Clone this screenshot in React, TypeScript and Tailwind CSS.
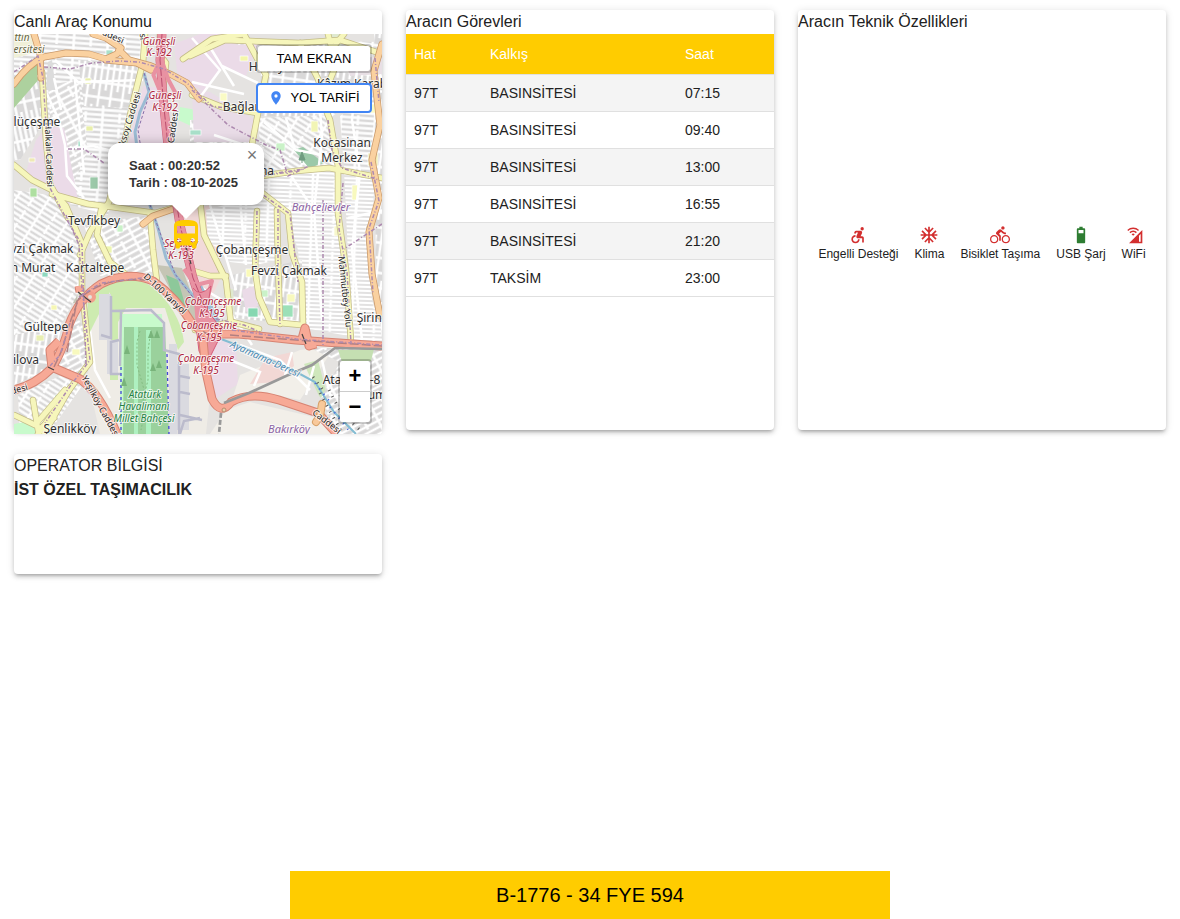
import React from "react";
import {
  MdAccessibleForward,
  MdAcUnit,
  MdCellWifi,
  MdDirectionsBike,
  MdDirectionsBus,
  MdLocationOn,
} from "react-icons/md";

const trips = [
  ["97T", "BASINSİTESİ", "07:15"],
  ["97T", "BASINSİTESİ", "09:40"],
  ["97T", "BASINSİTESİ", "13:00"],
  ["97T", "BASINSİTESİ", "16:55"],
  ["97T", "BASINSİTESİ", "21:20"],
  ["97T", "TAKSİM", "23:00"],
];

function BatteryIcon({ className }: { className?: string }) {
  return (
    <svg viewBox="0 0 24 24" fill="currentColor" fillRule="evenodd" className={className} aria-hidden="true">
      <path d="M15.7 4H14V2h-4v2H8.3C7.6 4 7 4.6 7 5.3v15.4c0 .7.6 1.3 1.3 1.3h7.4c.7 0 1.3-.6 1.3-1.3V5.3c0-.7-.6-1.3-1.3-1.3ZM9 6h6v4H9Z" />
    </svg>
  );
}

const features = [
  { label: "Engelli Desteği", Icon: MdAccessibleForward, ok: false },
  { label: "Klima", Icon: MdAcUnit, ok: false },
  { label: "Bisiklet Taşıma", Icon: MdDirectionsBike, ok: false },
  { label: "USB Şarj", Icon: BatteryIcon, ok: true },
  { label: "WiFi", Icon: MdCellWifi, ok: false },
];

// Street grids: id, column pitch, row pitch, rotation
const grids: [string, number, number, number][] = [
  ["g1", 17, 5, 4],
  ["g2", 5, 19, -12],
  ["g3", 14, 5, 32],
  ["g4", 22, 4, 2],
  ["g5", 6, 15, 8],
  ["g6", 13, 6, -28],
];

const blocks: [string, string][] = [
  ["M14 34H145L142 80L125 145L108 215L70 205L50 125L44 90L14 110Z", "g1"],
  ["M14 90L36 72L44 90V122L20 160H14Z", "g2"],
  ["M78 60L142 66L132 108L84 106Z", "g5"],
  ["M48 85L78 80L88 150L66 200L52 150Z", "g6"],
  ["M84 108L132 108L110 200L90 190Z", "g1"],
  ["M14 190L56 196L78 240L80 290L58 330L14 335Z", "g3"],
  ["M84 225L150 215L152 272L100 276Z", "g6"],
  ["M14 335L62 325L52 368L14 385Z", "g5"],
  ["M18 395L60 376L82 386L48 434H20Z", "g3"],
  ["M62 350L72 310L86 330L88 365L74 380L58 366Z", "g6"],
  ["M230 40L382 42V80L330 118L258 116L262 60Z", "g5"],
  ["M258 118L328 115L338 168L262 170Z", "g3"],
  ["M190 120L252 118L250 150L262 170V145H190Z", "g6"],
  ["M262 174L334 168L342 260L349 336L304 328L298 250L286 212L256 196Z", "g4"],
  ["M344 170L375 178L370 250L372 300L382 330V342L352 340Z", "g4"],
  ["M340 116L382 90V175L344 168Z", "g1"],
  ["M206 210L262 195L278 212V260L256 265L230 262L208 240Z", "g4"],
  ["M232 275L302 260L302 323L272 322L235 318Z", "g5"],
  ["M310 348H382V434H338L320 400L340 362Z", "g6"],
  ["M374 34H382V340L376 280Z", "g5"],
];

// Parks and industrial zones below the street grids
const areas: [string, string][] = [
  ["M180 107L196 110L200 130L178 120Z", "#c8facc"],
  ["M56 287L78 287L77 303L62 303Z", "#c5c5b5"],
  ["M180 212L210 205L222 276L210 300L190 272Z", "#f2dad9"],
  ["M157 265L182 268L200 316L195 332L176 300Z", "#c5c5b5"],
  ["M166 275L178 280L186 308L174 300Z", "#8dc89a"],
  ["M226 290L256 285L272 322L236 318Z", "#dfe9d0"],
  ["M212 334L236 346L238 384L214 400L207 370Z", "#ebdbe8"],
  ["M240 375L300 350L335 346L300 400L270 394L232 400Z", "#f2efe9"],
  ["M266 358L292 352L294 366L276 382L250 384Z", "#f2d8d5"],
  ["M226 410L250 402L318 418L335 434H210Z", "#f2efe9"],
  ["M304 364L318 360L330 406L319 396Z", "#cfe7bc"],
];

// Zones that interrupt the street grids
const zones: [string, string][] = [
  ["M47 126L64 128L78 200L66 205L52 190L26 172L36 140Z", "#ebdbe8"],
  ["M14 78L40 56V78L14 108Z", "#add19e"],
  ["M14 34H34L38 52L14 58Z", "#f0f0d8"],
  ["M48 62L52 60L56 90L46 90Z", "#dcdcdc"],
  ["M143 86L163 88L166 145H128Z", "#ebdbe8"],
  ["M174 44L200 34H243L205 92L178 80Z", "#ebdbe8"],
  ["M192 90L210 92L255 120L250 142H194Z", "#e9dce7"],
  ["M232 45L258 44L246 76L222 66Z", "#ebdbe8"],
  ["M294 150L303 147L324 163L309 168Z", "#9cc9a9"],
  ["M14 424L34 420L50 434H14Z", "#c8facc"],
  ["M326 34L343 34L340 54L325 50Z", "#dfe9d0"],
  ["M345 60L382 56V74L350 76Z", "#e8dfe5"],
  ["M338 350L374 349L371 361L342 362Z", "#c5dfb2"],
  ["M242 290L254 286L258 306L246 312Z", "#ebdbe8"],
];

const patches: [number, number, number, number, string][] = [
  [106, 50, 7, 5, "#a9e0ca"], [85, 78, 6, 6, "#e9efaa"], [86, 126, 7, 5, "#e9efaa"],
  [78, 141, 4, 8, "#a9e0ca"], [30, 188, 7, 9, "#aedfa0"], [90, 177, 8, 12, "#9cc9a9"],
  [29, 158, 6, 4, "#efe9b5"], [42, 272, 6, 5, "#8ed8bf"], [51, 305, 6, 5, "#f6f7b4"],
  [36, 335, 8, 6, "#e8efb2"], [240, 56, 8, 5, "#f4f6aa"], [220, 93, 7, 8, "#fafbc5"],
  [311, 121, 7, 11, "#f2f5b5"], [276, 143, 9, 8, "#caf2c8"], [370, 104, 8, 9, "#fafbc5"],
  [334, 226, 7, 10, "#f7f7cc"], [260, 290, 8, 7, "#caf2c8"], [282, 305, 11, 12, "#9ce0b8"],
  [248, 308, 10, 9, "#86d7b1"], [287, 294, 8, 8, "#f8f9be"], [349, 329, 5, 8, "#f8f9be"],
  [207, 315, 12, 10, "#dff0bf"], [72, 349, 8, 6, "#f8f9be"], [104, 246, 8, 7, "#edf5af"],
  [117, 225, 6, 7, "#caf2c8"], [246, 269, 9, 8, "#fafab9"], [352, 185, 6, 15, "#f8f9be"],
  [366, 226, 4, 20, "#c9c7b6"], [368, 153, 10, 13, "#f0edb7"], [190, 130, 11, 5, "#a9e0ca"],
  [55, 395, 5, 5, "#9ce0b8"], [350, 410, 10, 8, "#caf2c8"], [211, 152, 5, 6, "#f4f6aa"],
];

const yellowRoads = [
  "M42 72Q44 105 46 140L50 184L68 218",
  "M14 165L32 180L52 190L66 206L82 244L82 290L90 362L72 386L38 434",
  "M145 34L143 62L133 102L124 142L109 202L90 232L80 255",
  "M52 194L88 204L112 207L155 213L183 205",
  "M101 210L97 235L110 262L128 276",
  "M150 214L153 250L157 282",
  "M183 59L212 39L244 34",
  "M190 56L225 40L300 43L340 40L382 54",
  "M192 95L222 107L258 113L250 155L256 188L288 213L292 253L302 282L303 325",
  "M258 112L266 75L244 34",
  "M328 34L336 65L322 100L330 120L338 166L338 213L346 270L351 342",
  "M262 176L296 171L329 168L382 178",
  "M335 45L344 34M300 43L318 79L327 108",
  "M199 192L204 235L222 272L226 280L231 324",
  "M190 270L210 276L226 276",
  "M257 211L255 270L259 297L270 322L302 325",
  "M277 210L278 260L280 324",
  "M195 330L232 322L259 329",
  "M14 415L35 425L65 390M70 388L44 434",
  "M33 400L38 430L54 418",
  "M160 34V55L166 63L163 88",
];

const orangeRoads = [
  "M14 84Q28 64 44 57L66 53L89 54L106 59L117 54L121 48L106 38L93 34",
  "M34 34L40 54L41 78",
  "M119 50L129 60L151 66L172 75L187 83L199 99",
  "M106 60L137 63L151 70",
  "M143 224L153 216L173 209",
  "M382 44L374 71L380 125L372 160L379 198L369 232L372 274L380 316",
];

const salmonRoads = [
  "M14 390Q35 385 52 368Q65 346 69 325Q79 298 101 284Q128 270 153 281Q177 298 193 325L207 334L239 334L296 340L382 346",
  "M54 368L80 379Q99 392 117 434",
  "M203 340L206 372L212 399Q221 416 231 402Q250 391 279 400L318 413L337 434",
  "M52 368L50 350L59 341M80 292L79 286M302 339L305 328L309 346L316 344",
];

const railPath = "M224 403L249 393L286 376L312 365L335 348L382 349";

type MapLabel = [number, number, string, number?];

const placeNames: MapLabel[] = [
  [37, 126, "lüçeşme"], [241, 111, "Bağlar"], [342, 147, "Kocasinan"], [342, 162, "Merkez"],
  [94, 225, "Tevfikbey"], [42, 253, "vzi Çakmak"], [33, 272, "n Murat"], [95, 272, "Kartaltepe"],
  [252, 254, "Çobançeşme"], [289, 275, "Fevzi Çakmak"], [46, 331, "Gültepe"], [26, 364, "ilova"],
  [70, 433, "Şenlikköy"], [383, 322, "Şirinevler"], [332, 384, "Ata"], [375, 384, "-8"],
  [377, 399, "um"], [267, 175, "na"], [352, 88, "Kâzım Karab"], [272, 71, "Hürriyet"],
];

const exits: MapLabel[] = [
  [159, 45, "Güneşli"], [159, 56, "K-192"], [165, 99, "Güneşli"], [165, 111, "K-192"],
  [181, 247, "Sefaköy"], [181, 259, "K-193"], [213, 305, "Çobançeşme"], [212, 317, "K-195"],
  [209, 329, "Çobançeşme"], [209, 341, "K-195"], [206, 362, "Çobançeşme"], [206, 374, "K-195"],
];

const streets: MapLabel[] = [
  [46, 155, "Halkalı Caddesi", 88], [132, 122, "Aksoy Caddesi", -73], [176, 127, "Caddesi", -82],
  [107, 37, "Caddesi", 24], [342, 292, "Mahmutbey Yolu", 84], [163, 296, "D-100 Yanyol", 43],
  [98, 408, "Yeşilköy Caddesi", 61], [20, 392, "desi", -15], [140, 37, "si", 84],
  [325, 424, "Caddesi", 38],
];

function Labels({ items, className }: { items: MapLabel[]; className: string }) {
  return (
    <g className={className} textAnchor="middle">
      {items.map(([x, y, text, angle], i) => (
        <text key={i} x={x} y={y} transform={angle ? `rotate(${angle} ${x} ${y})` : undefined}>
          {text}
        </text>
      ))}
    </g>
  );
}

function CityMap() {
  return (
    <svg
      viewBox="14 34 368 400"
      preserveAspectRatio="xMidYMid slice"
      className="block h-full w-full font-['Noto_Sans',sans-serif]"
      role="img"
      aria-label="Harita"
    >
      <defs>
        {grids.map(([id, w, h, angle]) => (
          <pattern key={id} id={id} width={w * 2} height={h * 3} patternUnits="userSpaceOnUse" patternTransform={`rotate(${angle})`}>
            <rect width={w * 2} height={h * 3} fill="#d9d8d8" />
            <path
              d={`M0 ${h / 2}H${w * 2}M0 ${h * 1.5}H${w * 2}M0 ${h * 2.5}H${w * 2}M${w / 2} 0V${h * 3}M${w * 1.5} 0V${h * 2}`}
              stroke="#fff"
              strokeWidth="2.5"
            />
          </pattern>
        ))}
      </defs>
      <rect x="14" y="34" width="368" height="400" fill="#e5e3e1" />
      <path d="M90 285L115 280L178 302L215 345L206 434H100L88 380Z" fill="#efece6" />
      {areas.map(([d, fill], i) => <path key={i} d={d} fill={fill} />)}
      {blocks.map(([d, id], i) => <path key={i} d={d} fill={`url(#${id})`} />)}
      {zones.map(([d, fill], i) => <path key={i} d={d} fill={fill} />)}
      {patches.map(([x, y, width, height, fill], i) => (
        <rect key={i} x={x} y={y} width={width} height={height} fill={fill} stroke="#fff" strokeWidth="0.7" />
      ))}

      <g fill="none" stroke="#fff" strokeWidth="2.5">
        <path d="M38 75L59 120L65 145L67 176L84 198M75 80L84 173M55 60L78 82L143 80M54 78L61 110M64 149L93 146L130 156M192 38L220 70L198 100M208 44L234 86M222 66L258 83M192 82L244 94M214 135L260 150L290 174L315 212M264 122L296 150L328 156M286 118L295 150M191 174L260 192" />
        <path d="M210 205L236 290M240 200L246 265M188 280L222 300L252 345M240 345L280 360L310 390M230 360L260 372L254 386M292 352L285 375M318 80L322 138L314 210L322 320M358 60L352 120L360 172L352 250L362 340M385 210L348 218M300 210L345 204M88 312L102 300L106 290L123 286M90 330L95 370L110 398M322 360L330 395L355 402M314 366L306 395" />
      </g>

      <path d="M88 300Q115 266 151 286Q180 310 184 342L178 350L165 308H126L118 322V380H110V292L86 340Z" fill="#cdebb0" />
      <path d="M120 314H162L166 434H120Z" fill="#c8facc" />
      <path d="M124 327H165L169 434H123Z" fill="#9ad19c" />
      <path d="M134 327H138V434H134M146 330H151V434H146" fill="#aef0c0" />
      <path d="M99 294H111V340H99M107 340H118V374H107M169 344H177V434H169M176 364H189V430H176" fill="#dadae0" />
      <g fill="none" stroke="#bbbbcc" strokeWidth="2.5">
        <path d="M111 296V338L101 335M111 311L151 310L164 323V350L179 354V434M121 312L120 366M119 340L111 342V374H121M180 376L190 378M180 392L190 394M180 415L202 420M180 434L184 421L200 418" />
      </g>
      <path d="M121 367V434M167 354L169 434" stroke="#4345d8" strokeWidth="1.3" strokeDasharray="3 3" />
      <path d="M140 331L137 342V365L147 400L141 430M151 331L148 350V380L140 412" fill="none" stroke="#83bd82" strokeWidth="1" strokeDasharray="2 2" />
      <g fill="#79b47b">
        <path d="M127 345L124 354H130ZM151 330L148 338H154ZM157 330L154 338H160ZM153 363L150 371H156ZM159 360L156 368H162ZM124 377L121 386H127ZM156 390L153 399H159Z" />
      </g>

      <g fill="none" stroke="#9bbbd3" strokeWidth="3">
        <path d="M144 73L149 92L140 112L135 132L138 155L146 194L158 228L166 258L176 276L197 300L220 332" />
        <path d="M221 339L250 350L300 374L315 382L334 412L356 434" stroke="#83bcd2" strokeWidth="2" />
        <path d="M199 285L215 316L221 334" strokeWidth="5" />
      </g>
      <path d="M144 73L150 92L138 130L150 205L175 274L215 326" fill="none" stroke="#866da8" strokeWidth="1" strokeDasharray="3 2" />

      {[["#c3bb86", 6.5], ["#f6f6bb", 5]].map(([color, width]) => (
        <g key={color} fill="none" stroke={color as string} strokeWidth={width} strokeLinejoin="round" strokeLinecap="round">
          {yellowRoads.map((d) => <path key={d} d={d} />)}
        </g>
      ))}
      {[["#ca996a", 7], ["#fad1a0", 5.5]].map(([color, width]) => (
        <g key={color} fill="none" stroke={color as string} strokeWidth={width} strokeLinejoin="round" strokeLinecap="round">
          {orangeRoads.map((d) => <path key={d} d={d} />)}
        </g>
      ))}
      <g fill="none" strokeLinejoin="round">
        <path d="M162 34L160 60L164 108L169 155L180 225L193 278L210 330" stroke="#cf627c" strokeWidth="9" />
        <path d="M162 34L160 60L164 108L169 155L180 225L193 278L210 330" stroke="#e892a2" strokeWidth="8" />
        <path d="M153 76L161 58L168 79L177 96M153 74L162 96M196 285L212 281L207 300L196 286L184 269" stroke="#e892a2" strokeWidth="4" />
        <path d="M193 288Q200 298 211 286L207 310L223 331L206 365L199 351L196 327" fill="#e892a2" stroke="#d65c78" strokeWidth="1" />
        <path d="M162 34L160 60L164 108L169 155L180 225L193 278L207 312" stroke="#bb4e6f" strokeWidth="1" strokeDasharray="9 2" />
      </g>
      <g fill="none" strokeLinejoin="round">
        <g stroke="#d68372" strokeWidth="9">{salmonRoads.map((d) => <path key={d} d={d} />)}</g>
        <g stroke="#f7a996" strokeWidth="7">{salmonRoads.map((d) => <path key={d} d={d} />)}</g>
        <circle cx="90" cy="297" r="4" fill="#e5e3dc" stroke="#f2a08e" strokeWidth="4" />
        <circle cx="224" cy="410" r="2" fill="#e7d0ab" stroke="#b98b71" strokeWidth="1" />
        <path d="M230 335L296 340L382 346M193 325L207 334L222 334M54 367L62 350L69 325L79 298M67 352L77 301Q105 274 151 281" stroke="#b18082" strokeWidth="1.5" strokeDasharray="9 3" />
        <path d="M48 367L54 370M78 292L91 302M302 334L306 344M186 247L191 264" stroke="#444" strokeWidth="1.2" />
        <path d="M322 404L320 416L316 422" stroke="#d7a168" strokeWidth="8" strokeLinecap="round" />
        <path d="M322 404L320 416L316 422" stroke="#f8c99a" strokeWidth="6" strokeLinecap="round" />
      </g>
      <path d={railPath} fill="none" stroke="#999" strokeWidth="2.7" />
      <path d="M221 413L219 434" stroke="#999" strokeWidth="2.7" strokeDasharray="5 2" />
      <g fill="none" stroke="#ad89af" strokeWidth="1.5" strokeDasharray="4 2 1 2">
        <path d="M44 67L70 69L92 63L120 61L139 62L164 69L187 83L212 106L238 110M14 72L38 56L43 78L47 140L50 188L67 220L82 245L86 365M68 149L84 149L104 163M192 90L228 125L266 145L280 150L288 176L309 166M270 174L304 169M257 211L256 270M278 209L278 263L280 325" />
        <path d="M323 200V345M262 176L296 171M256 190L290 214L298 282M328 120L332 150L342 168L379 180M343 183L339 229L347 272L351 344M371 162L379 201L369 228L373 294M382 224L344 249M375 58L379 102" />
        <path d="M216 319L244 325L260 332M232 330L296 339L382 345M50 366L60 355L70 323M79 297L101 283L142 278M66 215L79 245L82 289L90 360L71 385L45 423" />
      </g>
      <g stroke="#555" strokeWidth="3" strokeDasharray="1 6">
        <path d="M320 393L332 415L342 432M329 390L342 414L360 430M313 377L323 390" fill="none" />
        <path d="M315 383L330 402M330 407L350 432M330 422L336 432" stroke="#4762dc" strokeWidth="2" />
      </g>
      <path d="M302 152L305 160H299ZM302 159V163" fill="#6f9c80" stroke="#6f9c80" />

      <g stroke="#fff" strokeWidth="2" strokeOpacity="0.7" strokeLinejoin="round" style={{ paintOrder: "stroke" }}>
        <Labels items={streets} className="fill-[#252525] text-[9px]" />
        <Labels items={placeNames} className="fill-[#303030] text-[12px]" />
        <Labels items={exits} className="fill-[#ad1f3d] text-[10px] italic" />
        <g className="text-[10px] italic" textAnchor="middle">
          <Labels items={[[145, 398, "Atatürk"], [144, 410, "Havalimanı"], [144, 422, "Millet Bahçesi"]]} className="fill-[#268243]" />
          <Labels items={[[321, 211, "Bahçelievler"], [289, 433, "Bakırköy"]]} className="fill-[#8b62a3] text-[11px]" />
          <Labels items={[[22, 41, "ttin"], [29, 53, "ersitesi"]]} className="fill-[#676743]" />
          <Labels items={[[264, 362, "Ayamama-Deresi", 24]]} className="fill-[#4c89b1]" />
        </g>
      </g>
    </svg>
  );
}

function Card({ title, className, children }: { title: string; className: string; children?: React.ReactNode }) {
  return (
    <section
      className={`rounded bg-white shadow-[0_3px_3px_-2px_rgba(0,0,0,0.2),0_3px_4px_rgba(0,0,0,0.14),0_1px_8px_rgba(0,0,0,0.12)] ${className}`}
    >
      <h2 className="text-base leading-6">{title}</h2>
      {children}
    </section>
  );
}

export default function App() {
  return (
    <div className="flex min-h-screen flex-col bg-white font-['Liberation_Sans',Arial,sans-serif] text-[#212121]">
      <main className="grid grid-cols-3 items-start gap-6 px-3.5 py-2.5">
        <Card title="Canlı Araç Konumu" className="h-[420px]">
          <div className="relative h-[400px] overflow-hidden">
            <CityMap />
            <div className="absolute top-[109px] left-[172px] flex -translate-x-1/2 flex-col items-center">
              <div className="relative z-10 w-[156px] rounded-xl bg-white py-3.5 pl-[21px] text-[13px] leading-[17px] font-bold text-[#333] shadow-[0_3px_14px_rgba(0,0,0,0.4)]">
                <p>Saat : 00:20:52</p>
                <p>Tarih : 08-10-2025</p>
                <button
                  type="button"
                  aria-label="Kapat"
                  className="absolute top-0 right-0 size-6 text-lg leading-6 font-normal text-[#757575]"
                >
                  ×
                </button>
              </div>
              <svg viewBox="0 0 28 14" className="relative z-10 h-3.5 w-7" aria-hidden="true">
                <path d="M0 0H28L14 14Z" fill="#fff" />
              </svg>
              <MdDirectionsBus className="-mt-0.5 size-9 text-[#ffcc00]" />
            </div>
            <div className="absolute top-2.5 right-2.5 flex w-[116px] flex-col gap-2.5 text-[13px] text-black">
              <button type="button" className="h-[29px] rounded border-2 border-black/20 bg-white bg-clip-padding">
                TAM EKRAN
              </button>
              <button
                type="button"
                className="flex h-[30px] items-center justify-center gap-1.5 rounded border-2 border-[#4285f4] bg-white"
              >
                <MdLocationOn className="size-4 text-[#4285f4]" />
                YOL TARİFİ
              </button>
            </div>
            <div className="absolute right-2.5 bottom-2.5 flex w-[34px] flex-col rounded border-2 border-black/20 bg-white bg-clip-padding text-[22px] font-bold text-black">
              <button type="button" className="h-[31px] border-b border-[#ccc] leading-[30px]" aria-label="Yakınlaştır">
                +
              </button>
              <button type="button" className="h-[30px] leading-[30px]" aria-label="Uzaklaştır">
                −
              </button>
            </div>
          </div>
        </Card>

        <Card title="Aracın Görevleri" className="h-[420px]">
          <table className="w-full table-fixed border-collapse text-left text-sm leading-5">
            <thead className="bg-[#ffcc00] text-white">
              <tr className="h-10 border-b border-[#e0e0e0]">
                <th className="w-[76px] px-2 font-normal">Hat</th>
                <th className="px-2 font-normal">Kalkış</th>
                <th className="w-[97px] px-2 font-normal">Saat</th>
              </tr>
            </thead>
            <tbody>
              {trips.map((trip) => (
                <tr key={trip[2]} className="h-[37px] border-b border-[#e0e0e0] odd:bg-[#f4f4f4]">
                  {trip.map((value, i) => (
                    <td key={i} className="px-2">{value}</td>
                  ))}
                </tr>
              ))}
            </tbody>
          </table>
        </Card>

        <Card title="Aracın Teknik Özellikleri" className="h-[420px]">
          <ul className="flex h-[420px] items-center justify-center gap-4">
            {features.map(({ label, Icon, ok }) => (
              <li key={label} className="flex flex-col items-center text-xs leading-[18px] font-medium">
                <Icon className={ok ? "size-5 text-[#2e7d32]" : "size-5 text-[#d32f2f]"} />
                {label}
              </li>
            ))}
          </ul>
        </Card>

        <Card title="OPERATOR BİLGİSİ" className="h-[120px]">
          <p className="leading-6 font-bold">İST ÖZEL TAŞIMACILIK</p>
        </Card>
      </main>

      <footer className="mx-auto mt-auto flex h-12 w-full max-w-[600px] items-center justify-center bg-[#ffcc00] text-xl text-black">
        B-1776 - 34 FYE 594
      </footer>
    </div>
  );
}
